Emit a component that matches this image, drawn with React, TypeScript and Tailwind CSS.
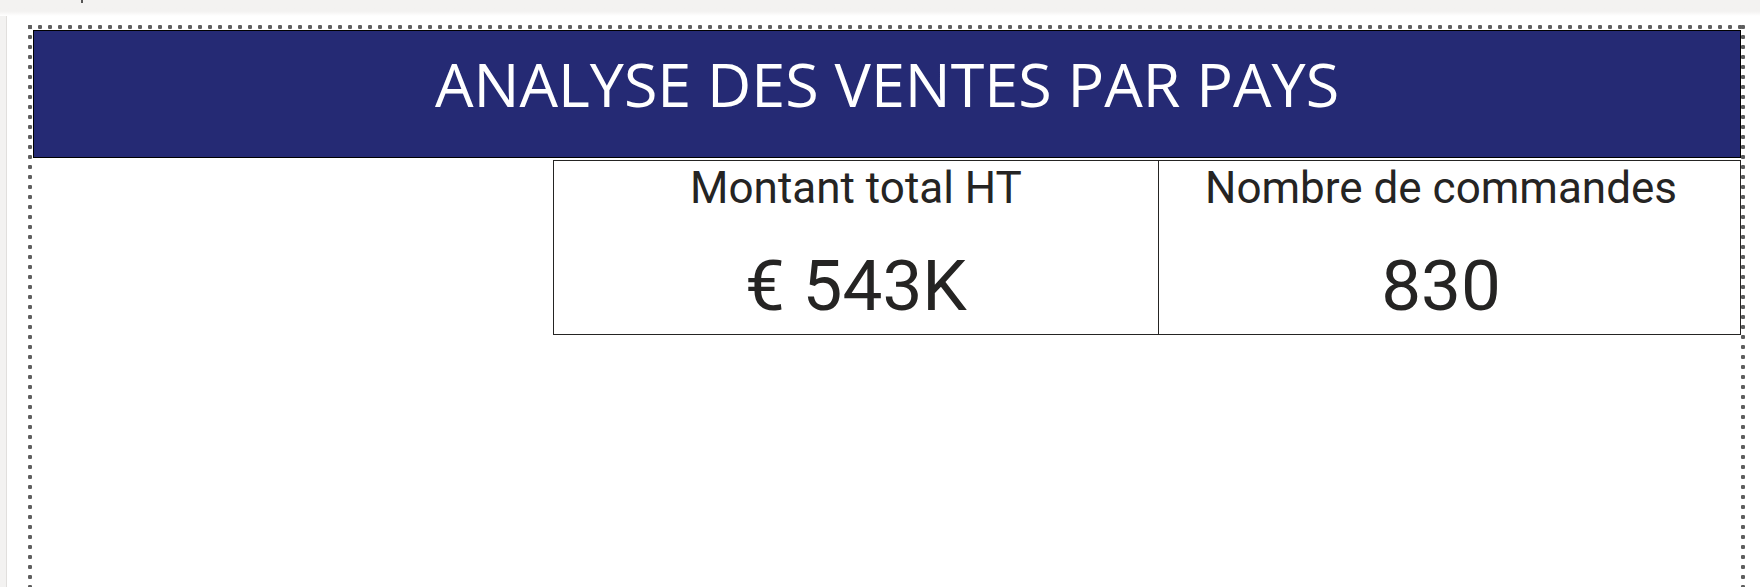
import React from "react";

const kpis = [
  { label: "Montant total HT", value: "€ 543K", cell: "w-[605px] border-r" },
  { label: "Nombre de commandes", value: "830", cell: "flex-1 pr-[17px]" },
];

const dotsX =
  "bg-[radial-gradient(circle_at_2px_2px,#5e5e5e_2px,transparent_2.4px)] bg-[length:10px_4px] bg-repeat-x";
const dotsY =
  "bg-[radial-gradient(circle_at_2px_2px,#5e5e5e_2px,transparent_2.4px)] bg-[length:4px_10px] bg-repeat-y";

const App = () => {
  return (
    <div className="w-[1760px] h-[587px] overflow-hidden bg-white flex flex-col">
      {/* top toolbar edge */}
      <div className="relative h-[16px] shrink-0 bg-gradient-to-b from-[#f3f2f1] from-70% to-white">
        <div className="absolute left-[81px] top-0 w-[2px] h-[3px] bg-[#555]"></div>
      </div>

      <div className="flex flex-1 min-h-0">
        <div className="w-[7px] shrink-0 bg-[#f3f2f1] border-r border-[#e1dfdd]"></div>

        <div className="flex-1 pl-[21px] pt-[9px]">
          {/* selected visual frame */}
          <div className="relative w-[1717px] h-full pl-[5px] pr-[4px] pt-[5px]">
            <div className={`absolute left-0 right-0 top-0 h-[4px] ${dotsX}`}></div>
            <div className={`absolute left-0 top-0 bottom-0 w-[4px] ${dotsY}`}></div>
            <div className={`absolute right-0 top-0 bottom-0 w-[4px] ${dotsY}`}></div>

            <div className="h-[128px] border border-black bg-[#252a74] pt-[22px] text-center">
              <h1 className="text-[61px] leading-none font-normal text-white font-['Open_Sans',sans-serif]">
                ANALYSE DES VENTES PAR PAYS
              </h1>
            </div>

            <div className="mt-[2px] flex justify-end">
              <div className="w-[1188px] h-[175px] border border-[#252423] flex font-['Roboto',sans-serif] text-[#252423]">
                {kpis.map((k) => (
                  <div
                    key={k.label}
                    className={`${k.cell} border-[#252423] flex flex-col items-center pt-[5px]`}
                  >
                    <p className="text-[44px] leading-none">{k.label}</p>
                    <p className="mt-[40px] text-[71px] leading-none">{k.value}</p>
                  </div>
                ))}
              </div>
            </div>
          </div>
        </div>
      </div>
    </div>
  );
};

export default App;
